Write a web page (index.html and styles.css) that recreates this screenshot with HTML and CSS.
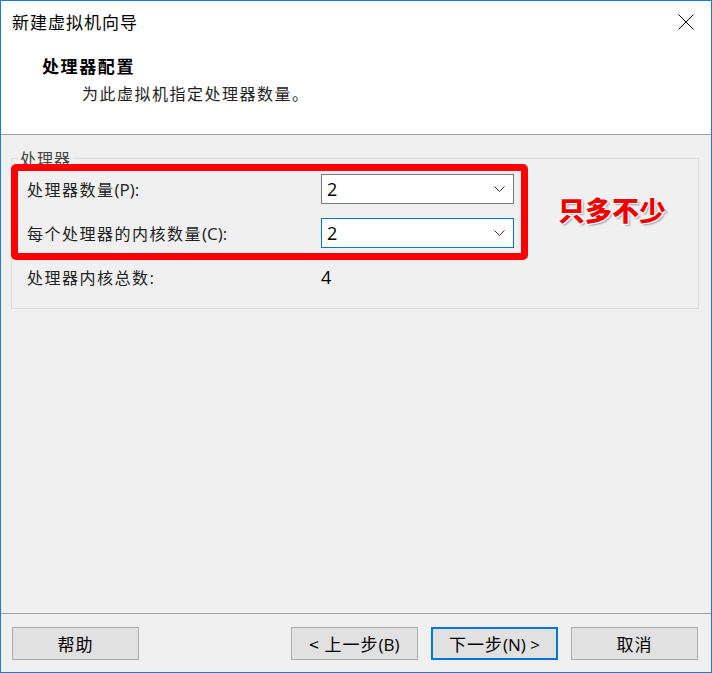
FILE: index.html
```html
<!DOCTYPE html>
<html lang="zh-CN">
<head>
<meta charset="utf-8">
<title>新建虚拟机向导</title>
<link rel="stylesheet" href="styles.css">
</head>
<body>
<div class="window">
  <div class="titlebar">
    <span class="title">新建虚拟机向导</span>
    <svg class="close" width="16" height="16" viewBox="0 0 16 16"><path d="M0.5 0.5 L15.5 15.5 M15.5 0.5 L0.5 15.5" stroke="#000" stroke-width="1" fill="none"/></svg>
  </div>
  <div class="header">
    <div class="h-title">处理器配置</div>
    <div class="h-sub">为此虚拟机指定处理器数量。</div>
  </div>
  <div class="body">
    <fieldset class="group">
      <legend class="legend">处理器</legend>
      <div class="grid">
        <div class="label">处理器数量<span class="lat">(P):</span></div>
        <div class="select"><span class="val">2</span><svg class="chev" width="11" height="6" viewBox="0 0 11 6"><path d="M0.5 0.5 L5.5 5.5 L10.5 0.5" stroke="#333" stroke-width="1" fill="none"/></svg></div>
        <div class="label">每个处理器的内核数量<span class="lat">(C):</span></div>
        <div class="select focus"><span class="val">2</span><svg class="chev" width="11" height="6" viewBox="0 0 11 6"><path d="M0.5 0.5 L5.5 5.5 L10.5 0.5" stroke="#333" stroke-width="1" fill="none"/></svg></div>
        <div class="label">处理器内核总数<span class="lat">:</span></div>
        <div class="total">4</div>
      </div>
    </fieldset>
  </div>
  <div class="footer">
    <button class="btn">帮助</button>
    <div class="btn-group">
      <button class="btn">&lt; 上一步<span class="lat">(B)</span></button>
      <button class="btn default">下一步<span class="lat">(N) &gt;</span></button>
      <button class="btn">取消</button>
    </div>
  </div>
  <div class="highlight"></div>
  <div class="note">只多不少</div>
</div>
</body>
</html>
```
FILE: styles.css
```css
html, body {
  margin: 0;
  padding: 0;
  background: #ffffff;
}
body {
  font-family: "Noto Sans CJK SC", "Open Sans", sans-serif;
  color: #000;
}
.window {
  position: relative;
  width: 712px;
  height: 673px;
  box-sizing: border-box;
  border: 1px solid #1c7bd6;
  display: flex;
  flex-direction: column;
  background: #ffffff;
  overflow: hidden;
}
.titlebar {
  height: 43px;
  flex: none;
  display: flex;
  align-items: center;
  justify-content: space-between;
  padding: 0 17px 2px 11px;
  box-sizing: border-box;
}
.title {
  font-size: 17px;
  line-height: 24px;
  letter-spacing: 1px;
  color: #000;
}
.close {
  display: block;
}
.header {
  height: 91px;
  flex: none;
  box-sizing: border-box;
  padding-top: 10px;
  border-bottom: 1px solid #a0a0a0;
}
.h-title {
  padding-left: 41px;
  font-size: 17px;
  font-weight: bold;
  line-height: 24px;
  letter-spacing: 1.6px;
  margin-bottom: 3px;
}
.h-sub {
  padding-left: 81px;
  font-size: 16px;
  line-height: 24px;
  letter-spacing: 1.5px;
  color: #222;
}
.body {
  flex: 1;
  background: #f0f0f0;
  padding: 13px 12px 0 10px;
  box-sizing: border-box;
  border-bottom: 1px solid #a0a0a0;
}
.group {
  margin: 0;
  border: 1px solid #dcdcdc;
  padding: 6px 0 16px 15px;
  min-width: 0;
}
.legend {
  font-size: 16px;
  line-height: 20px;
  color: #444;
  padding: 0 2px;
  margin-left: -9px;
  letter-spacing: 1px;
}
.grid {
  display: grid;
  grid-template-columns: 294px 193px;
  grid-auto-rows: 30px;
  row-gap: 14px;
  align-items: center;
}
.label {
  font-size: 16px;
  line-height: 24px;
  letter-spacing: 1.5px;
  color: #222;
}
.lat {
  font-family: "Open Sans", "Noto Sans CJK SC", sans-serif;
  letter-spacing: 0;
}
.label .lat {
  font-size: 17px;
}
.select {
  height: 30px;
  box-sizing: border-box;
  background: #fff;
  border: 1px solid #7a7a7a;
  display: flex;
  align-items: center;
  justify-content: space-between;
  padding: 0 8px 0 5px;
}
.select.focus {
  border-color: #0078d7;
}
.val, .total {
  font-family: "Open Sans", "Noto Sans CJK SC", sans-serif;
  font-size: 18px;
  line-height: 24px;
  color: #000;
}
.chev {
  display: block;
}
.footer {
  height: 58px;
  flex: none;
  background: #f0f0f0;
  box-sizing: border-box;
  padding: 13px 13px 0 11px;
  display: flex;
  justify-content: space-between;
  align-items: flex-start;
}
.btn-group {
  display: flex;
  gap: 13px;
}
.btn {
  width: 127px;
  height: 33px;
  box-sizing: border-box;
  background: #e1e1e1;
  border: 1px solid #adadad;
  font-family: "Noto Sans CJK SC", "Open Sans", sans-serif;
  font-size: 17px;
  letter-spacing: 1px;
  color: #000;
  padding: 0;
  margin: 0;
}
.btn .lat {
  font-size: 17px;
}
.btn.default {
  border: 2px solid #0078d7;
}
.highlight {
  position: absolute;
  left: 10px;
  top: 163px;
  width: 517px;
  height: 96px;
  box-sizing: border-box;
  border: 7px solid #ff0000;
  border-radius: 5px;
}
.note {
  position: absolute;
  left: 557px;
  top: 191px;
  font-size: 27px;
  line-height: 36px;
  font-weight: 900;
  color: #ee0000;
  letter-spacing: 0;
  text-shadow: -1px -1px 0 #fff, 1px -1px 0 #fff, -1px 1px 0 #fff, 1px 1px 0 #fff, 2px 2px 2px rgba(0,0,0,0.35);
}
```
